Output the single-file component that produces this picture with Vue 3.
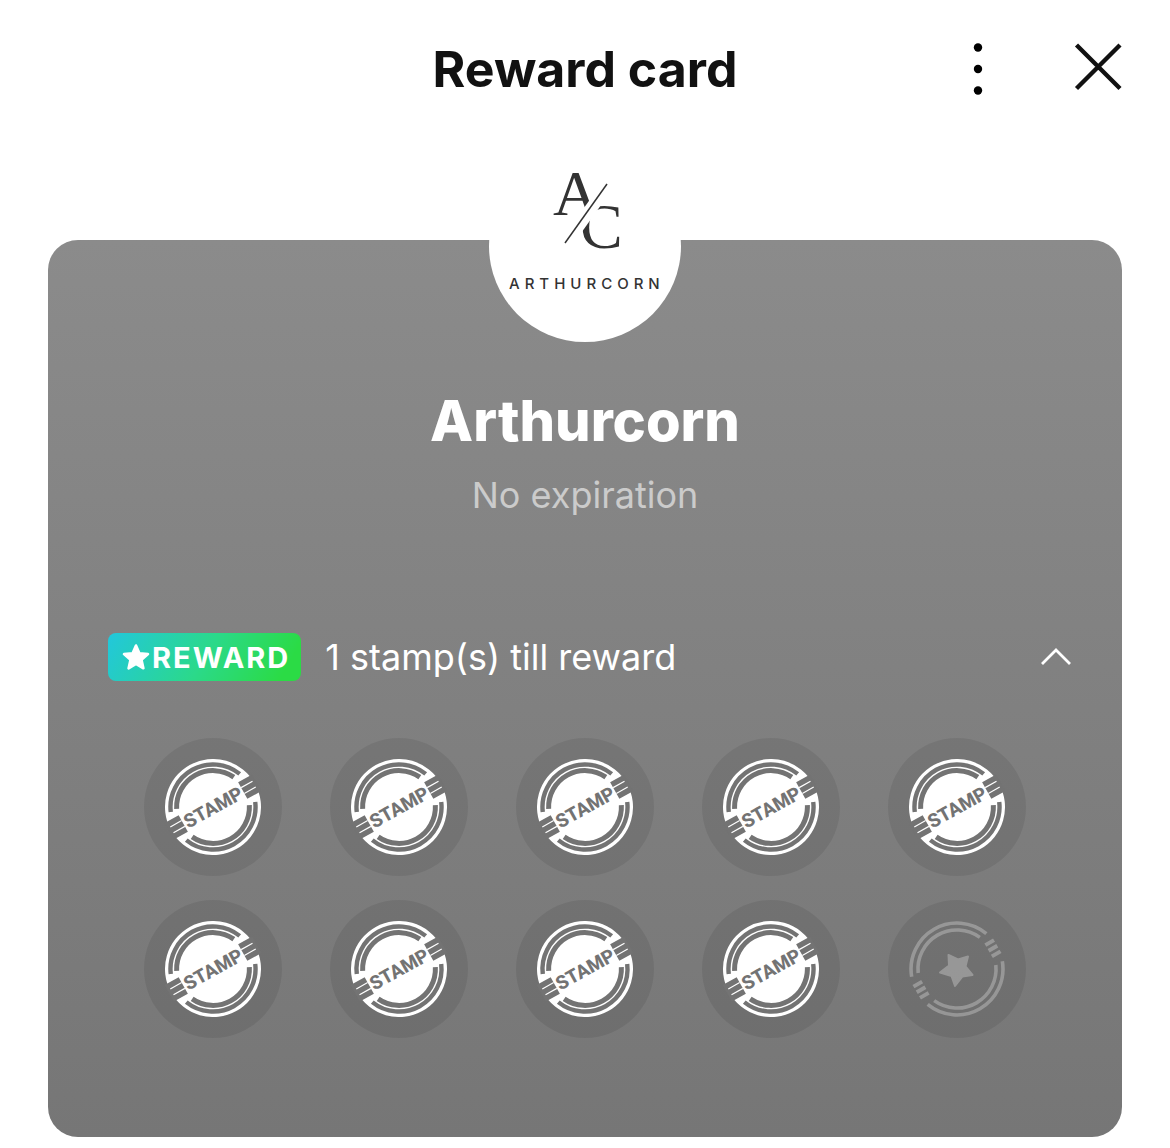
<script setup>
const total = 10
const collected = 9
const stamps = Array.from({ length: total }, (_, i) => ({ id: i + 1, filled: i < collected }))
</script>

<template>
  <div class="page">
    <header class="bar">
      <h1 class="bar-title">Reward card</h1>
      <div class="bar-actions">
        <button class="icon-button" type="button" aria-label="More options">
          <svg width="48" height="60" viewBox="0 0 48 60">
            <circle cx="24" cy="8.5" r="4.2" />
            <circle cx="24" cy="30" r="4.2" />
            <circle cx="24" cy="51.5" r="4.2" />
          </svg>
        </button>
        <button class="icon-button" type="button" aria-label="Close">
          <svg width="48" height="60" viewBox="0 0 48 60">
            <path d="M2.500 6 46 49.500M46 6 2.500 49.500" fill="none" stroke="#111" stroke-width="4.400" />
          </svg>
        </button>
      </div>
    </header>

    <main class="content">
      <section class="card">
        <div class="logo">
          <svg width="192" height="192" viewBox="0 0 192 192" role="img" aria-label="Arthurcorn logo">
            <defs>
              <clipPath id="logo-left"><path d="M0 0H136L112 34 70 93 0 120Z" /></clipPath>
              <clipPath id="logo-right"><path d="M127 34 85 93V120H192V34Z" /></clipPath>
            </defs>
            <g class="monogram">
              <text x="64" y="65" clip-path="url(#logo-left)">A</text>
              <text x="91" y="98" clip-path="url(#logo-right)">C</text>
            </g>
            <path d="M118 34 76 93" stroke="#333" stroke-width="1.500" />
            <text class="wordmark" x="20" y="139">ARTHURCORN</text>
          </svg>
        </div>

        <h2 class="name">Arthurcorn</h2>
        <p class="expiry">No expiration</p>

        <div class="progress">
          <span class="badge">
            <svg width="28" height="28" viewBox="0 0 28 28">
              <path
                d="M14 2.500 17.400 10.200 26 11 19.500 16.700 21.400 25.300 14 20.900 6.600 25.300 8.500 16.700 2 11 10.600 10.200Z"
                fill="#fff" stroke="#fff" stroke-width="2.600" stroke-linejoin="round"
              />
            </svg>
            <span>REWARD</span>
          </span>
          <span class="status">1 stamp(s) till reward</span>
          <button class="icon-button toggle" type="button" aria-label="Hide stamps" aria-expanded="true">
            <svg width="32" height="20" viewBox="0 0 32 20">
              <path d="M2 17 16 3 30 17" fill="none" stroke="#fff" stroke-width="2.800" />
            </svg>
          </button>
        </div>

        <ul class="stamps">
          <li v-for="stamp in stamps" :key="stamp.id" class="slot">
            <svg v-if="stamp.filled" width="96" height="96" viewBox="-48 -48 96 96" role="img" aria-label="Stamp">
              <g transform="rotate(-29)">
                <circle r="48" fill="#fff" />
                <g fill="none" stroke="#737373">
                  <path d="M-39.400-16A42.500 42.500 0 0 1 39.400-16M-39.400 16A42.500 42.500 0 0 0 39.400 16" stroke-width="4.400" />
                  <path d="M-32.700-16A36.400 36.400 0 0 1 32.700-16M-32.700 16A36.400 36.400 0 0 0 32.700 16" stroke-width="5" />
                </g>
                <path d="M34-9.500H50V9.500H34ZM-34-9.500H-50V9.500H-34Z" fill="#737373" />
                <path d="M34-3.300H47M34 3.300H47M-34-3.300H-47M-34 3.300H-47" stroke="#fff" stroke-width="1.200" />
                <text class="stamp-text" x="0" y="7" text-anchor="middle">STAMP</text>
              </g>
            </svg>
            <svg v-else width="96" height="96" viewBox="-48 -48 96 96" role="img" aria-label="Reward" opacity="0.27">
              <g transform="rotate(-30)" fill="none" stroke="#fff">
                <path d="M-43.100-16A46 46 0 0 1 43.100-16M-43.100 16A46 46 0 0 0 43.100 16" stroke-width="3.600" />
                <path d="M-35.600-16A39 39 0 0 1 35.600-16M-35.600 16A39 39 0 0 0 35.600 16" stroke-width="3.600" />
                <path d="M36.500-6.500H46.500M36.500 0H46.500M36.500 6.500H46.500M-36.500-6.500H-46.500M-36.500 0H-46.500M-36.500 6.500H-46.500" stroke-width="4" />
              </g>
              <path
                d="M-8.500-14 1-9.500 11-12.500 8.500-2.500 15.500 6 5.500 7.500-2 17-5.500 7-17 3.500-8-3.500Z"
                fill="#fff" stroke="#fff" stroke-width="2" stroke-linejoin="round"
              />
            </svg>
          </li>
        </ul>
      </section>
    </main>
  </div>
</template>

<style>
body {
  margin: 0;
  background: #fff;
}
</style>

<style scoped>
.page {
  font-family: Inter, "Liberation Sans", sans-serif;
  color: #111;
}

.bar {
  display: grid;
  grid-template-columns: 1fr auto 1fr;
  align-items: center;
  height: 138px;
  padding: 0 48px;
}

.bar-title {
  grid-column: 2;
  margin: 0;
  font-size: 50px;
  font-weight: 700;
  line-height: 60px;
}

.bar-actions {
  display: flex;
  justify-content: flex-end;
  gap: 72px;
}

.icon-button {
  display: flex;
  padding: 0;
  border: 0;
  background: none;
  color: inherit;
  cursor: pointer;
}

.content {
  padding: 102px 48px 12px;
}

.card {
  display: flex;
  flex-direction: column;
  align-items: center;
  padding-bottom: 99px;
  border-radius: 30px;
  background: linear-gradient(#8b8b8b, #767676);
  color: #fff;
}

.logo {
  width: 192px;
  height: 192px;
  margin-top: -90px;
  border-radius: 50%;
  background: #fff;
}

.monogram {
  font-family: "Liberation Serif", serif;
  font-size: 64px;
  fill: #333;
}

.wordmark {
  font-size: 15px;
  font-weight: 500;
  letter-spacing: 5px;
  fill: #333;
}

.name {
  margin: 44px 0 0;
  font-size: 56px;
  font-weight: 800;
  line-height: 70px;
}

.expiry {
  margin: 16px 0 0;
  font-size: 36px;
  line-height: 46px;
  color: #cbcbcb;
}

.progress {
  display: flex;
  align-items: center;
  align-self: stretch;
  margin-top: 115px;
  padding: 0 50px 0 60px;
}

.badge {
  display: flex;
  align-items: center;
  gap: 2px;
  height: 48px;
  padding: 0 11px 0 14px;
  border-radius: 8px;
  background: linear-gradient(120deg, #22c7dc, #2bd98a 50%, #2bdb45 90%);
  font-size: 29px;
  font-weight: 700;
  letter-spacing: 2px;
}

.status {
  margin-left: 24px;
  font-size: 36px;
  line-height: 46px;
}

.toggle {
  margin-left: auto;
}

.stamps {
  display: grid;
  grid-template-columns: repeat(5, 138px);
  gap: 24px 48px;
  margin: 57px 0 0;
  padding: 0;
  list-style: none;
}

.slot {
  display: flex;
  align-items: center;
  justify-content: center;
  height: 138px;
  border-radius: 50%;
  background: rgba(0, 0, 0, 0.08);
}

.stamp-text {
  font-family: Roboto, sans-serif;
  font-size: 19px;
  font-weight: 800;
  fill: #737373;
}
</style>
